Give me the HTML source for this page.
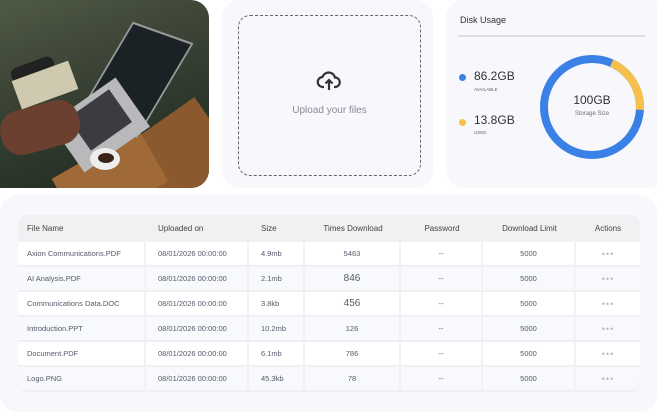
<!DOCTYPE html>
<html><head><style>
*{margin:0;padding:0;box-sizing:border-box}
body{width:657px;height:412px;background:#fff;font-family:"Liberation Sans",sans-serif;position:relative;overflow:hidden}
.card{position:absolute;background:#f7f7fc;border-radius:18px}
.photo{position:absolute;left:0;top:0;width:209px;height:188px;border-radius:0 18px 18px 0;overflow:hidden;background:linear-gradient(160deg,#4f5a45 0%,#3d4536 35%,#2e3a2d 60%,#1f2620 100%)}
table{border-collapse:separate;border-spacing:0;position:absolute;left:18px;top:215px;width:622px;font-size:7.5px;color:#555a6b}
th{background:#f1f1f3;font-weight:normal;height:27px;color:#444;font-size:8px}
td{height:25px;border-right:2px solid #f2f2f5;border-bottom:2px solid #eef0f4;background:#fff}
tr:nth-child(odd) td{background:#f8f9fc}
td:last-child{border-right:none}
.dots{color:#bbb;letter-spacing:1px;font-size:9px}
</style></head><body>
<div class="photo">
 <div style="position:absolute;left:90px;top:130px;width:140px;height:80px;background:#8a5a2e;transform:rotate(-35deg);"></div>
 <div style="position:absolute;left:60px;top:150px;width:100px;height:60px;background:#a06a38;transform:rotate(-30deg)"></div>
 <div style="position:absolute;left:100px;top:30px;width:70px;height:100px;background:#1b2226;transform:skewX(-15deg) rotate(18deg);border:2px solid #999"></div>
 <div style="position:absolute;left:60px;top:95px;width:80px;height:60px;background:#b9b9bb;transform:rotate(-35deg)"></div>
 <div style="position:absolute;left:75px;top:100px;width:50px;height:40px;background:#3a3c40;transform:rotate(-35deg)"></div>
 <div style="position:absolute;left:0;top:105px;width:80px;height:45px;background:#6b4030;transform:rotate(-15deg);border-radius:20px"></div>
 <div style="position:absolute;left:90px;top:148px;width:30px;height:22px;background:#eee;border-radius:50%"></div>
 <div style="position:absolute;left:98px;top:153px;width:16px;height:10px;background:#3a2418;border-radius:50%"></div>
 <div style="position:absolute;left:10px;top:62px;width:45px;height:14px;background:#222;border-radius:7px;transform:rotate(-20deg)"></div>
 <div style="position:absolute;left:15px;top:70px;width:60px;height:30px;background:#cfc9b0;transform:rotate(-20deg)"></div>
</div>
<div class="card" style="left:222px;top:0;width:211px;height:188px"></div>
<div style="position:absolute;left:238px;top:15px;width:183px;height:161px;border:1.3px dashed #666;border-radius:12px"></div>
<svg style="position:absolute;left:316px;top:70px" width="26" height="22" viewBox="0 0 26 22"><path d="M8 17H7a5 5 0 0 1-.5-10A6.5 6.5 0 0 1 19 7.5a4.5 4.5 0 0 1 0 9.5h-1" fill="none" stroke="#333" stroke-width="2.2"/><path d="M13 20V10M9.5 13.5L13 10l3.5 3.5" fill="none" stroke="#333" stroke-width="2.2"/></svg>
<div style="position:absolute;left:238px;top:105px;width:183px;text-align:center;font-size:10px;color:#8a8a99">Upload your files</div>
<div class="card" style="left:446px;top:0;width:220px;height:188px"></div>
<div style="position:absolute;left:460px;top:15px;font-size:9px;color:#333">Disk Usage</div>
<div style="position:absolute;left:458px;top:35px;width:187px;height:2px;background:#dedee6"></div>
<div style="position:absolute;left:459px;top:74px;width:7px;height:7px;border-radius:50%;background:#3a80e6"></div>
<div style="position:absolute;left:474px;top:69px;font-size:12px;color:#333">86.2GB</div>
<div style="position:absolute;left:474px;top:87px;font-size:4.5px;color:#666">AVAILABLE</div>
<div style="position:absolute;left:459px;top:119px;width:7px;height:7px;border-radius:50%;background:#f6c04d"></div>
<div style="position:absolute;left:474px;top:113px;font-size:12px;color:#333">13.8GB</div>
<div style="position:absolute;left:474px;top:130px;font-size:4.5px;color:#666">USED</div>
<svg style="position:absolute;left:538px;top:54px" width="108" height="106" viewBox="0 0 108 106"><circle cx="54" cy="53" r="48" fill="none" stroke="#3a80e6" stroke-width="8"/><circle cx="54" cy="53" r="48" fill="none" stroke="#f6c04d" stroke-width="8" stroke-dasharray="58 400" transform="rotate(-66 54 53)"/></svg>
<div style="position:absolute;left:552px;top:93px;width:80px;text-align:center;font-size:12px;color:#333">100GB</div>
<div style="position:absolute;left:552px;top:111px;width:80px;text-align:center;font-size:6px;color:#777">Storage Size</div>
<div class="card" style="left:0;top:195px;width:657px;height:217px;border-radius:18px"></div>
<table>
<colgroup><col style="width:128px"><col style="width:103px"><col style="width:56px"><col style="width:96px"><col style="width:82px"><col style="width:93px"><col style="width:64px"></colgroup>
<tr><th style="text-align:left;padding-left:9px;border-radius:10px 0 0 0">File Name</th><th style="text-align:left;padding-left:12px">Uploaded on</th><th style="text-align:left;padding-left:12px">Size</th><th>Times Download</th><th>Password</th><th>Download Limit</th><th style="border-radius:0 10px 0 0">Actions</th></tr>
<tr><td style="padding-left:9px">Axion Communications.PDF</td><td style="padding-left:12px">08/01/2026 00:00:00</td><td style="padding-left:12px">4.9mb</td><td align=center>5463</td><td align=center>--</td><td align=center>5000</td><td align=center class=dots>•••</td></tr>
<tr><td style="padding-left:9px">AI Analysis.PDF</td><td style="padding-left:12px">08/01/2026 00:00:00</td><td style="padding-left:12px">2.1mb</td><td align=center style="font-size:10px">846</td><td align=center>--</td><td align=center>5000</td><td align=center class=dots>•••</td></tr>
<tr><td style="padding-left:9px">Communications Data.DOC</td><td style="padding-left:12px">08/01/2026 00:00:00</td><td style="padding-left:12px">3.8kb</td><td align=center style="font-size:10px">456</td><td align=center>--</td><td align=center>5000</td><td align=center class=dots>•••</td></tr>
<tr><td style="padding-left:9px">Introduction.PPT</td><td style="padding-left:12px">08/01/2026 00:00:00</td><td style="padding-left:12px">10.2mb</td><td align=center>126</td><td align=center>--</td><td align=center>5000</td><td align=center class=dots>•••</td></tr>
<tr><td style="padding-left:9px">Document.PDF</td><td style="padding-left:12px">08/01/2026 00:00:00</td><td style="padding-left:12px">6.1mb</td><td align=center>786</td><td align=center>--</td><td align=center>5000</td><td align=center class=dots>•••</td></tr>
<tr><td style="padding-left:9px;border-radius:0 0 0 10px">Logo.PNG</td><td style="padding-left:12px">08/01/2026 00:00:00</td><td style="padding-left:12px">45.3kb</td><td align=center>78</td><td align=center>--</td><td align=center>5000</td><td align=center class=dots style="border-radius:0 0 10px 0">•••</td></tr>
</table>
</body></html>
